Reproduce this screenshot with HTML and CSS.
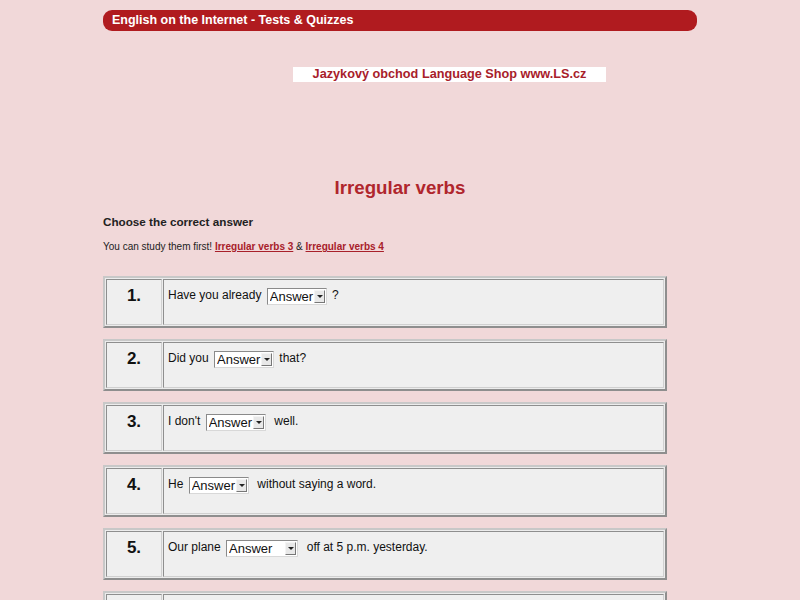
FILE: index.html
```html
<!DOCTYPE html>
<html>
	<head>
		<meta charset="utf-8">
		<title>Irregular verbs - Tests &amp; Quizzes</title>
		<link rel="stylesheet" href="styles.css">
	</head>
	<body>
    <div class="page">
      <div class="topbar">English on the Internet - Tests &amp; Quizzes</div>
      <div class="adrow">
        <a class="ad" href="#">Jazykový obchod Language Shop www.LS.cz</a>
      </div>
      <h1 class="title">Irregular verbs</h1>
      <h2 class="task">Choose the correct answer</h2>
      <p class="hint">You can study them first! <a href="#">Irregular verbs 3</a> &amp; <a href="#">Irregular verbs 4</a></p>

      <table class="q">
        <tr>
          <td class="num">1.</td>
          <td class="text">Have you already <span class="pick w60"><select><option>Answer</option></select><span class="arrow"></span></span> ?</td>
        </tr>
      </table>
      <table class="q">
        <tr>
          <td class="num">2.</td>
          <td class="text">Did you <span class="pick w60"><select><option>Answer</option></select><span class="arrow"></span></span> that?</td>
        </tr>
      </table>
      <table class="q">
        <tr>
          <td class="num">3.</td>
          <td class="text">I don't <span class="pick w60"><select><option>Answer</option></select><span class="arrow"></span></span>&nbsp; well.</td>
        </tr>
      </table>
      <table class="q">
        <tr>
          <td class="num">4.</td>
          <td class="text">He <span class="pick w60"><select><option>Answer</option></select><span class="arrow"></span></span>&nbsp; without saying a word.</td>
        </tr>
      </table>
      <table class="q">
        <tr>
          <td class="num">5.</td>
          <td class="text">Our plane <span class="pick w72"><select><option>Answer</option></select><span class="arrow"></span></span>&nbsp; off at 5 p.m. yesterday.</td>
        </tr>
      </table>
      <table class="q">
        <tr>
          <td class="num"></td>
          <td class="text"></td>
        </tr>
      </table>
    </div>
	</body>
</html>
```

FILE: styles.css
```css
body {
  margin: 0;
  background-color: #f1d8d9;
  font-family: "Liberation Sans", Arial, sans-serif;
  color: #111;
}
.page {
  width: 594px;
  margin: 0 auto;
  padding-top: 10px;
}
.topbar {
  height: 21px;
  line-height: 21px;
  background-color: #b01b1f;
  color: #fff;
  font-size: 12.5px;
  font-weight: bold;
  padding-left: 9px;
  border-radius: 9px;
}
.adrow {
  padding: 33px 0 0 190px;
  height: 105px;
}
.ad {
  display: inline-block;
  width: 313px;
  height: 15px;
  line-height: 15px;
  background-color: #fff;
  color: #a8202a;
  font-size: 12.7px;
  font-weight: bold;
  text-align: center;
  text-decoration: none;
}
.title {
  margin: 0;
  padding-top: 8px;
  font-size: 18.7px;
  line-height: 22px;
  color: #b0262d;
  text-align: center;
}
.task {
  margin: 16px 0 0;
  font-size: 11.7px;
  line-height: 14px;
  color: #222;
}
.hint {
  margin: 11px 0 0;
  font-size: 10px;
  line-height: 13px;
  color: #222;
}
.hint a {
  color: #a8202a;
  font-weight: bold;
}
.q {
  width: 564px;
  height: 52px;
  margin-top: 11px;
  border-collapse: separate;
  border-spacing: 1px;
  border: 2px solid;
  border-color: #c8c8c8 #8e8e8e #8e8e8e #c8c8c8;
  background-color: #ececec;
}
.hint + .q {
  margin-top: 23px;
}
.q td {
  border: 1px solid;
  border-color: #8e8e8e #d0d0d0 #d0d0d0 #8e8e8e;
  background-color: #efefef;
  vertical-align: top;
}
.q .num {
  width: 52px;
  font-size: 17px;
  font-weight: bold;
  text-align: center;
  padding-top: 6px;
}
.q .text {
  font-size: 12px;
  padding: 8px 4px 0;
}
.pick {
  display: inline-flex;
  height: 17px;
  vertical-align: -2px;
  margin: 0 2px;
  background-color: #fff;
  border: 1px solid;
  border-color: #8a8a8a #d8d8d8 #d8d8d8 #8a8a8a;
  box-sizing: border-box;
}
.w60 {
  width: 60px;
}
.w72 {
  width: 72px;
}
.pick select {
  flex: 1;
  min-width: 0;
  appearance: none;
  -webkit-appearance: none;
  border: 0;
  padding: 0 0 0 2px;
  margin: 0;
  background: transparent;
  font-family: "Liberation Sans", Arial, sans-serif;
  font-size: 13px;
  line-height: 15px;
  color: #111;
}
.arrow {
  width: 11px;
  height: 13px;
  margin: 1px 1px 0 0;
  border: 1px solid;
  border-color: #f4f4f4 #777 #777 #f4f4f4;
  background-color: #e8e8e8;
  box-sizing: border-box;
  position: relative;
}
.arrow::after {
  content: "";
  position: absolute;
  left: 2px;
  top: 4px;
  border-left: 3px solid transparent;
  border-right: 3px solid transparent;
  border-top: 3px solid #222;
}
```
